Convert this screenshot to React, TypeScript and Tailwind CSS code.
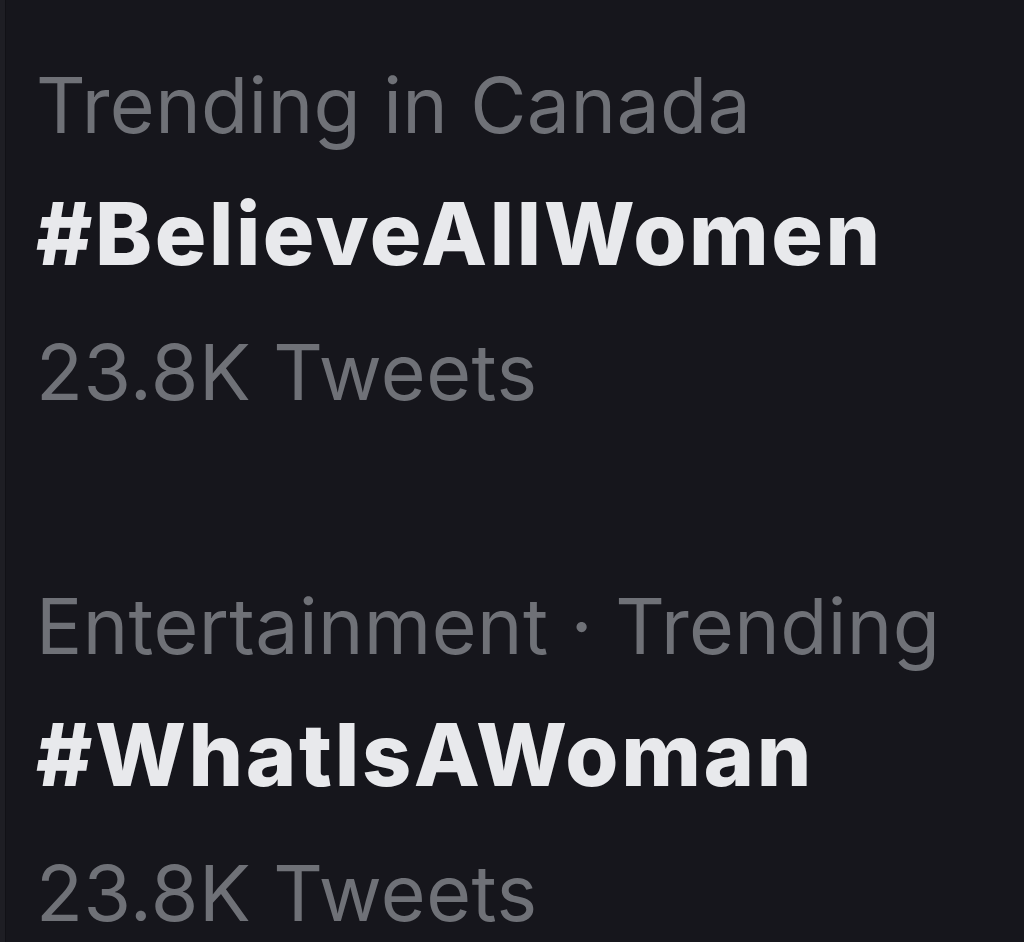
import * as React from "react";

/** Two trend rows from the "Trends for you" panel, shown very zoomed in. */

interface Trend {
  context: string;
  tag: string;
  count: string;
}

const trends: Trend[] = [
  { context: "Trending in Canada", tag: "#BelieveAllWomen", count: "23.8K Tweets" },
  { context: "Entertainment · Trending", tag: "#WhatIsAWoman", count: "23.8K Tweets" },
];

function TrendRow({ t }: { t: Trend }) {
  return (
    <div className="pt-[39px] pb-[74px]">
      <div className="text-[77px] leading-[132px] tracking-[0.4px] text-[#6f7177] whitespace-nowrap">
        {t.context}
      </div>
      <div className="text-[86px] leading-[126px] font-extrabold tracking-[2.6px] text-[#e8e9ec] whitespace-nowrap">
        {t.tag}
      </div>
      <div className="text-[77px] leading-[150px] tracking-[0.5px] text-[#6f7177] whitespace-nowrap">
        {t.count}
      </div>
    </div>
  );
}

export default function App() {
  return (
    <div className="flex h-[942px] w-[1024px] overflow-hidden bg-[#16161c] font-['Inter','Liberation_Sans',sans-serif]">
      <div className="w-[6px] shrink-0 bg-[#1e1e24] border-r border-[#111116]" />
      <div className="flex-1 pl-[30px]">
        {trends.map((t) => (
          <TrendRow key={t.tag} t={t} />
        ))}
      </div>
    </div>
  );
}
